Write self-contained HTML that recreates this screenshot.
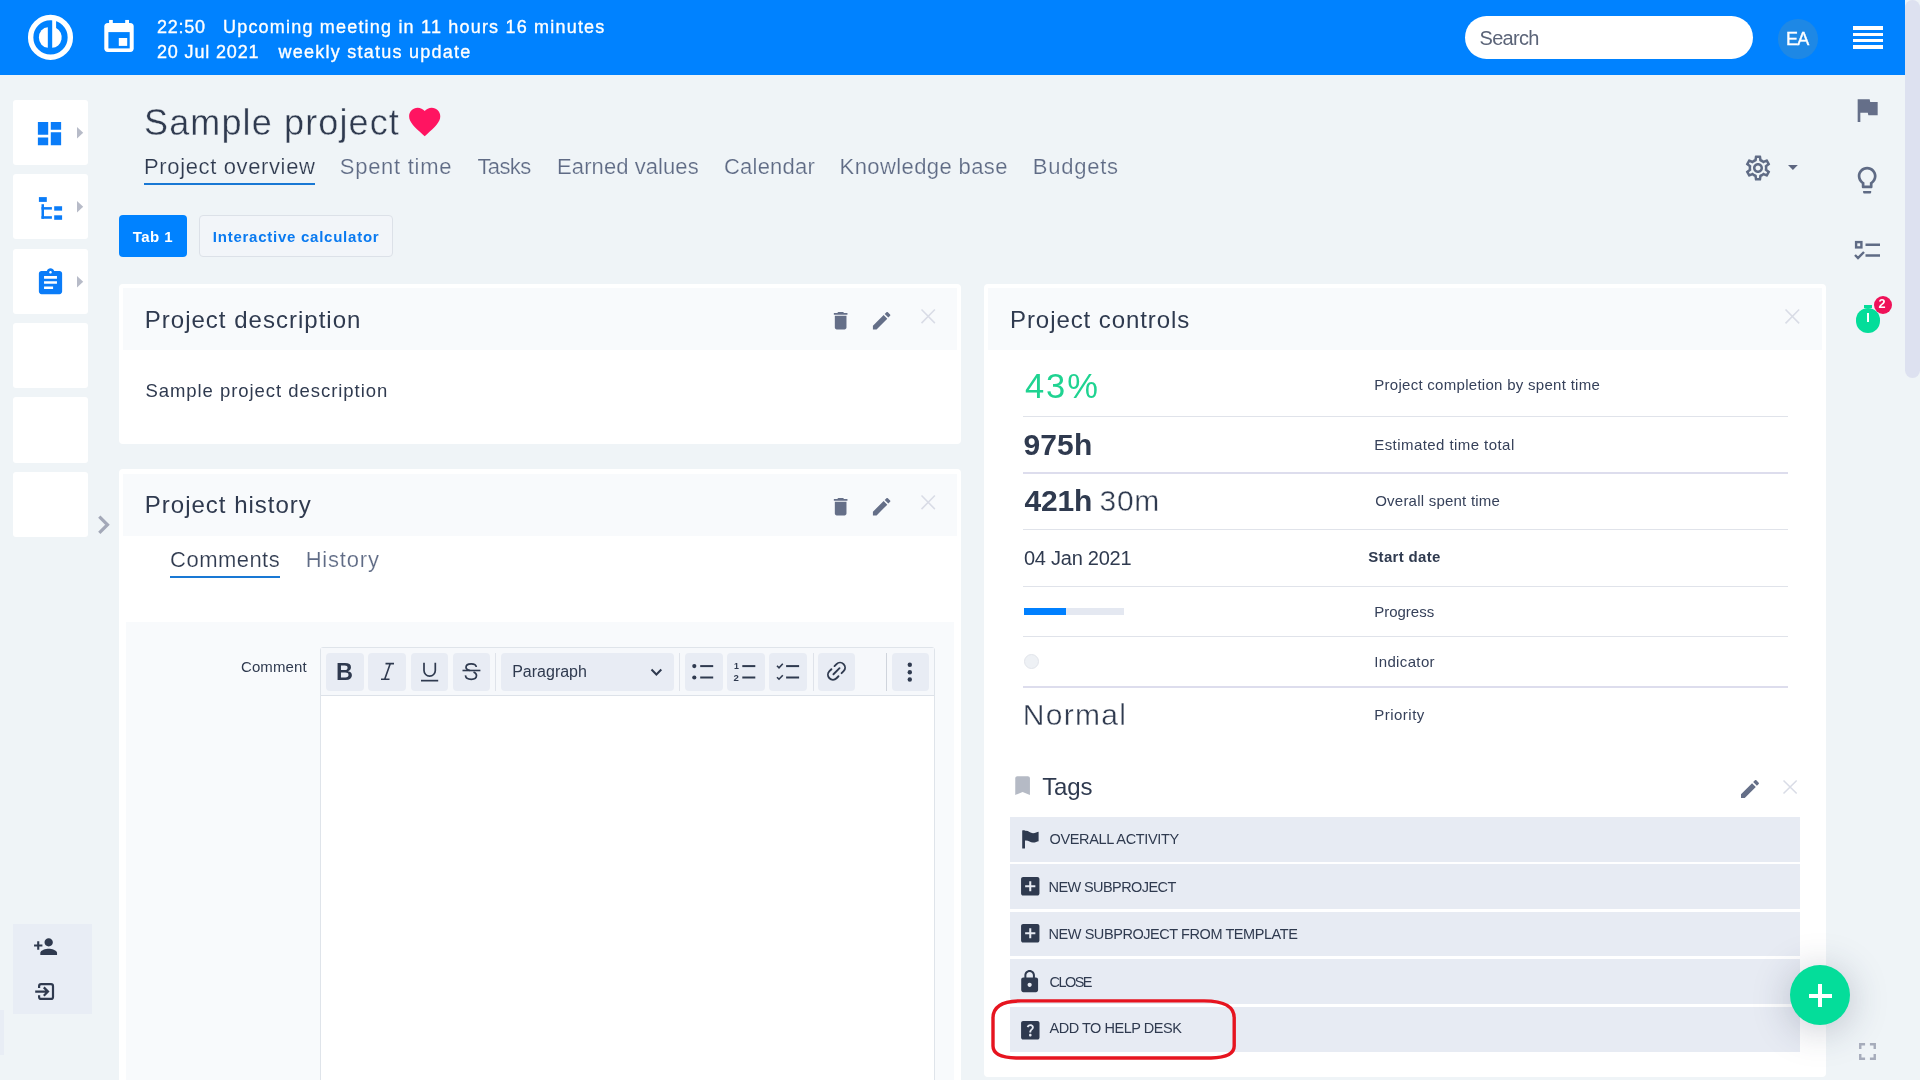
<!DOCTYPE html>
<html lang="en"><head><meta charset="utf-8"><title>Sample project</title>
<style>
*{box-sizing:border-box;margin:0;padding:0}
html,body{width:1920px;height:1080px;overflow:hidden;background:#eff4f7;font-family:"Liberation Sans",sans-serif}
#root{position:relative;width:1920px;height:1080px;overflow:hidden;background:#eff4f7}
.a{position:absolute}
.t{position:absolute;white-space:nowrap;line-height:1;font-family:"Liberation Sans",sans-serif}
svg{position:absolute;overflow:visible}
.tile{position:absolute;left:13.400px;width:74.600px;height:65.200px;background:#fff;border-radius:3px}
.panel{position:absolute;background:#fff;border-radius:4px}
.phead{position:absolute;background:#f8fafc}
.sep{position:absolute;left:1023px;width:765px;height:1px;background:#e0e3ea}
.row{position:absolute;left:1010px;width:790px;height:44.400px;background:#e7ebf3}
.ckb{position:absolute;top:653.2px;width:37.5px;height:37.5px;background:#e8ecf4;border-radius:4px}
.cks{position:absolute;top:653px;width:1px;height:38px;background:#dfe3ea}
#txt{position:absolute;left:0;top:0;width:1920px;height:1080px;will-change:transform}

</style></head>
<body>
<div id="root">
<!-- header -->
<div class="a" style="left:0;top:0;width:1905px;height:74.5px;background:#0082ff"></div>
<!-- scrollbar -->
<div class="a" style="left:1905px;top:0;width:15px;height:1080px;background:#eff4f7"></div>
<div class="a" style="left:1905.300px;top:0;width:15px;height:378px;background:#dde1f0;border-radius:7.500px"></div>
<!-- logo -->
<svg style="left:20px;top:8px" width="60" height="60" viewBox="20 8 60 60">
  <circle cx="50.500" cy="37.400" r="19.850" fill="none" stroke="#fff" stroke-width="5.400"/>
  <path d="M47.800 27.200 A8.900 10.250 0 0 0 47.800 47.700 Z" fill="#fff"/>
  <path d="M52.200 19.500 L56.100 20.300 L56.100 28.100 A9.500 10.250 0 0 1 52.200 47.700 Z" fill="#fff"/>
</svg>
<!-- calendar icon -->
<svg style="left:95px;top:10px" width="50" height="50" viewBox="95 10 50 50">
  <rect x="104.300" y="23" width="29.400" height="28.900" rx="3.600" fill="#fff"/>
  <rect x="109.100" y="19.950" width="3.700" height="5" fill="#fff"/>
  <rect x="125.200" y="19.950" width="3.800" height="5" fill="#fff"/>
  <rect x="108.400" y="32.100" width="21.300" height="16.300" fill="#0082ff"/>
  <rect x="118.800" y="38" width="8.400" height="7.900" fill="#fff"/>
</svg>
<!-- search -->
<div class="a" style="left:1464.5px;top:15.8px;width:288.8px;height:43.5px;background:#fff;border-radius:22px"></div>
<!-- avatar -->
<div class="a" style="left:1778px;top:19.2px;width:39.6px;height:39.6px;background:#1e88e5;border-radius:50%"></div>
<!-- hamburger -->
<div class="a" style="left:1853px;top:26.2px;width:29.5px;height:3.8px;background:#fff"></div>
<div class="a" style="left:1853px;top:32.5px;width:29.5px;height:3.8px;background:#fff"></div>
<div class="a" style="left:1853px;top:38.7px;width:29.5px;height:3.8px;background:#fff"></div>
<div class="a" style="left:1853px;top:45px;width:29.5px;height:3.8px;background:#fff"></div>

<!-- left tiles -->
<div class="tile" style="top:99.8px"></div>
<div class="tile" style="top:174.2px"></div>
<div class="tile" style="top:248.6px"></div>
<div class="tile" style="top:323.0px"></div>
<div class="tile" style="top:397.4px"></div>
<div class="tile" style="top:471.8px"></div>
<!-- tile icons -->
<svg style="left:34.200px;top:118.100px" width="31" height="31" viewBox="0 0 24 24"><path fill="#0a7cf8" d="M3 13h8V3H3v10zm0 8h8v-6H3v6zm10 0h8V11h-8v10zm0-18v6h8V3h-8z"/></svg>
<svg style="left:30px;top:185px" width="60" height="45" viewBox="30 185 60 45"><g fill="#0a7cf8"><rect x="38.9" y="197.100" width="7.900" height="4.800"/><rect x="41.500" y="204.200" width="2.500" height="14.550"/><rect x="41.500" y="207.100" width="10.400" height="2.500"/><rect x="41.500" y="216.200" width="10.400" height="2.550"/><rect x="54.200" y="206.250" width="7.900" height="4.400"/><rect x="54.200" y="215.300" width="7.900" height="4.500"/></g></svg>
<svg style="left:35px;top:267px" width="31" height="31" viewBox="0 0 24 24"><path fill="#0a7cf8" d="M19 3h-4.18C14.4 1.84 13.3 1 12 1c-1.3 0-2.4.84-2.82 2H5c-1.1 0-2 .9-2 2v14c0 1.1.9 2 2 2h14c1.1 0 2-.9 2-2V5c0-1.1-.9-2-2-2zm-7 0c.55 0 1 .45 1 1s-.45 1-1 1-1-.45-1-1 .45-1 1-1zm2 14H7v-2h7v2zm3-4H7v-2h10v2zm0-4H7V7h10v2z"/></svg>
<!-- small arrows on tiles -->
<svg style="left:77px;top:127px" width="6.2" height="11.6" viewBox="0 0 6.2 11.6"><path d="M0 0 L6.2 5.800 L0 11.600Z" fill="#b7bbc8"/></svg>
<svg style="left:77px;top:201.100px" width="6.2" height="11.6" viewBox="0 0 6.2 11.6"><path d="M0 0 L6.2 5.800 L0 11.600Z" fill="#b7bbc8"/></svg>
<svg style="left:77px;top:275.500px" width="6.2" height="11.6" viewBox="0 0 6.2 11.6"><path d="M0 0 L6.2 5.800 L0 11.600Z" fill="#b7bbc8"/></svg>
<!-- collapse chevron -->
<svg style="left:95px;top:510px" width="20" height="30" viewBox="95 510 20 30"><path d="M99.300 516.600 L107.500 524.750 L99.300 532.900" fill="none" stroke="#a3a8b8" stroke-width="3.200"/></svg>
<!-- bottom-left box -->
<div class="a" style="left:13px;top:924px;width:79px;height:90px;background:#e8edf5"></div>
<div class="a" style="left:0;top:1010px;width:4px;height:45px;background:#e8edf5"></div>
<svg style="left:33.200px;top:934.100px" width="25.100" height="25.100" viewBox="0 0 24 24"><path fill="#2f3a4f" d="M15 12c2.21 0 4-1.79 4-4s-1.79-4-4-4-4 1.79-4 4 1.790 4 4 4zm-9-2V7H4v3H1v2h3v3h2v-3h3v-2H6zm9 4c-2.67 0-8 1.34-8 4v2h16v-2c0-2.66-5.33-4-8-4z"/></svg>
<svg style="left:30px;top:978px" width="30" height="28" viewBox="30 978 30 28"><g fill="none" stroke="#2f3a4f" stroke-width="2.200"><path d="M39.100 988 V986.200 a2 2 0 0 1 2-2 H51 a2 2 0 0 1 2 2 V996.900 a2 2 0 0 1 -2 2 H41.100 a2 2 0 0 1 -2-2 V995.200"/><path d="M35.200 991.600 H47.300 M43.800 987.400 L48 991.600 L43.800 995.800"/></g></svg>

<!-- heart -->
<svg style="left:405.600px;top:103.300px" width="37.400" height="37.400" viewBox="0 0 24 24"><path fill="#ff1461" d="M12 21.35l-1.45-1.32C5.4 15.36 2 12.28 2 8.5 2 5.42 4.42 3 7.5 3c1.74 0 3.41.81 4.5 2.090C13.090 3.810 14.760 3 16.500 3 19.580 3 22 5.420 22 8.500c0 3.780-3.400 6.860-8.550 11.540L12 21.350z"/></svg>
<!-- tab underline -->
<div class="a" style="left:144.2px;top:182.5px;width:171px;height:2px;background:#1978d4"></div>
<!-- subtab buttons -->
<div class="a" style="left:119.2px;top:215px;width:67.8px;height:41.8px;background:#0082ff;border-radius:4px"></div>
<div class="a" style="left:199.3px;top:215px;width:193.5px;height:41.8px;border:1px solid #dce1e8;border-radius:4px;background:#f2f5f9"></div>
<!-- gear + caret -->
<svg style="left:1742.600px;top:152.500px" width="30" height="30" viewBox="0 0 24 24"><path fill="#5f6b85" d="M19.43 12.98c.04-.32.07-.64.07-.98 0-.34-.03-.66-.07-.98l2.11-1.65c.19-.15.24-.42.12-.64l-2-3.46c-.09-.16-.26-.25-.44-.25-.06 0-.12.01-.17.03l-2.49 1c-.52-.4-1.08-.73-1.69-.98l-.38-2.65C14.46 2.18 14.25 2 14 2h-4c-.25 0-.46.18-.49.42l-.38 2.65c-.61.25-1.17.59-1.69.98l-2.49-1c-.06-.02-.12-.03-.18-.03-.17 0-.34.09-.43.25l-2 3.46c-.13.22-.07.49.12.64l2.11 1.65c-.04.32-.07.65-.07.98 0 .33.03.66.07.98l-2.11 1.65c-.19.15-.24.42-.12.64l2 3.46c.09.16.26.25.44.25.06 0 .12-.01.17-.03l2.49-1c.52.4 1.08.73 1.69.98l.38 2.65c.03.24.24.42.49.42h4c.25 0 .46-.18.49-.42l.38-2.65c.61-.25 1.17-.59 1.69-.98l2.49 1c.06.02.12.03.18.03.17 0 .34-.09.43-.25l2-3.46c.12-.22.07-.49-.12-.64l-2.11-1.65zm-1.98-1.71c.04.31.05.52.05.73 0 .21-.02.43-.05.73l-.14 1.13.89.7 1.08.84-.7 1.21-1.27-.51-1.04-.42-.9.68c-.43.32-.84.56-1.25.73l-1.06.43-.16 1.13-.2 1.35h-1.4l-.19-1.35-.16-1.13-1.06-.43c-.43-.18-.83-.41-1.23-.71l-.91-.7-1.06.43-1.27.51-.7-1.21 1.08-.84.89-.7-.14-1.13c-.03-.31-.05-.54-.05-.74s.02-.43.05-.73l.14-1.13-.89-.7-1.08-.84.7-1.21 1.27.51 1.04.42.9-.68c.43-.32.84-.56 1.25-.73l1.06-.43.16-1.13.2-1.35h1.39l.19 1.35.16 1.13 1.06.43c.43.18.83.41 1.23.71l.91.7 1.06-.43 1.27-.51.7 1.21-1.07.85-.89.7.14 1.13zM12 8c-2.21 0-4 1.79-4 4s1.79 4 4 4 4-1.79 4-4-1.79-4-4-4zm0 6c-1.1 0-2-.9-2-2s.9-2 2-2 2 .9 2 2-.9 2-2 2z"/></svg>
<svg style="left:1788.100px;top:165px" width="9.800" height="5" viewBox="0 0 10 5" preserveAspectRatio="none"><path d="M0 0h10L5 5z" fill="#5d6680"/></svg>

<!-- right icon column -->
<svg style="left:1851.450px;top:93.900px" width="32" height="32" viewBox="0 0 24 24"><path fill="#656f89" d="M14.4 6L14 4H5v17h2v-7h5.6l.4 2h7V6z"/></svg>
<svg style="left:1851px;top:164px" width="32.300" height="32.300" viewBox="0 0 24 24"><path fill="#5f6b85" d="M9 21c0 .55.45 1 1 1h4c.55 0 1-.45 1-1v-1H9v1zm3-19C8.14 2 5 5.14 5 9c0 2.38 1.19 4.47 3 5.74V17c0 .55.45 1 1 1h6c.55 0 1-.45 1-1v-2.26c1.81-1.27 3-3.36 3-5.74 0-3.86-3.14-7-7-7zm2.85 11.1l-.85.6V16h-4v-2.3l-.85-.6C7.8 12.16 7 10.63 7 9c0-2.76 2.24-5 5-5s5 2.24 5 5c0 1.63-.8 3.16-2.15 4.1z"/></svg>
<svg style="left:1853.800px;top:240px" width="27" height="21" viewBox="0 0 27 21"><g fill="none" stroke="#5f6b85" stroke-width="2.400"><rect x="2.1" y="2.1" width="5.3" height="5.3"/><path d="M11.5 4.8H26M11.5 15.5H26M1 15l3 3 6-6"/></g></svg>
<!-- timer -->
<div class="a" style="left:1855.800px;top:308.400px;width:24.700px;height:24.700px;border-radius:50%;background:#04dd9a"></div>
<div class="a" style="left:1863.900px;top:304.800px;width:8.300px;height:3px;background:#04dd9a"></div>
<div class="a" style="left:1866.700px;top:313.100px;width:2.700px;height:8.900px;background:#fff"></div>
<div class="a" style="left:1874.100px;top:295.900px;width:18px;height:18px;border-radius:50%;background:#ef1259"></div>

<!-- panel: project description -->
<div class="panel" style="left:119px;top:283.900px;width:841.900px;height:160px"></div>
<div class="phead" style="left:123.100px;top:288px;width:833.750px;height:61.500px"></div>
<!-- panel: project history -->
<div class="panel" style="left:119px;top:468.900px;width:841.900px;height:640px"></div>
<div class="phead" style="left:123.100px;top:473.600px;width:833.750px;height:62px"></div>
<!-- comment area -->
<div class="a" style="left:125.800px;top:621.600px;width:828.200px;height:470px;background:#f8fafc"></div>
<div class="a" style="left:170px;top:576px;width:110px;height:2.100px;background:#1978d4"></div>
<!-- editor -->
<div class="a" style="left:320.3px;top:647px;width:614.5px;height:460px;background:#fff;border:1px solid #dfe4ea;border-radius:3px"></div>
<div class="a" style="left:321.300px;top:648px;width:612.500px;height:47.800px;background:#f6f8fb;border-bottom:1px solid #dde2e9"></div>
<div class="ckb" style="left:326.2px"></div>
<div class="ckb" style="left:368.3px"></div>
<div class="ckb" style="left:410.7px"></div>
<div class="ckb" style="left:452.8px"></div>
<div class="cks" style="left:495.3px"></div>
<div class="ckb" style="left:501px;width:173px"></div>
<div class="cks" style="left:679.3px"></div>
<div class="ckb" style="left:685px"></div>
<div class="ckb" style="left:727px"></div>
<div class="ckb" style="left:769px"></div>
<div class="cks" style="left:812.6px"></div>
<div class="ckb" style="left:817.7px"></div>
<div class="cks" style="left:885.6px;background:#cfd4dc;width:1.5px"></div>
<div class="ckb" style="left:891.6px"></div>

<!-- panel icons -->
<svg style="left:829.050px;top:308.900px" width="23.300" height="23.300" viewBox="0 0 24 24"><path fill="#656f88" d="M6 19c0 1.1.9 2 2 2h8c1.1 0 2-.9 2-2V7H6v12zM19 4h-3.5l-1-1h-5l-1 1H5v2h14V4z"/></svg>
<svg style="left:869.800px;top:308.900px" width="23.300" height="23.300" viewBox="0 0 24 24"><path fill="#656f88" d="M3 17.25V21h3.75L17.81 9.94l-3.75-3.75L3 17.25zM20.71 7.04c.39-.39.39-1.02 0-1.41l-2.34-2.34c-.39-.39-1.02-.39-1.41 0l-1.83 1.83 3.75 3.75 1.83-1.83z"/></svg>
<svg style="left:920.700px;top:309px" width="14.400" height="14.600" viewBox="0 0 14 14" preserveAspectRatio="none"><path d="M0.5 0.5L13.5 13.5M13.5 0.5L0.5 13.5" stroke="#d9dce6" stroke-width="1.500" fill="none"/></svg>
<svg style="left:829.050px;top:494.900px" width="23.300" height="23.300" viewBox="0 0 24 24"><path fill="#656f88" d="M6 19c0 1.1.9 2 2 2h8c1.1 0 2-.9 2-2V7H6v12zM19 4h-3.5l-1-1h-5l-1 1H5v2h14V4z"/></svg>
<svg style="left:869.800px;top:494.900px" width="23.300" height="23.300" viewBox="0 0 24 24"><path fill="#656f88" d="M3 17.25V21h3.75L17.81 9.94l-3.75-3.75L3 17.25zM20.71 7.04c.39-.39.39-1.02 0-1.41l-2.34-2.34c-.39-.39-1.02-.39-1.41 0l-1.83 1.83 3.75 3.75 1.83-1.83z"/></svg>
<svg style="left:920.700px;top:495px" width="14.400" height="14.600" viewBox="0 0 14 14" preserveAspectRatio="none"><path d="M0.5 0.5L13.5 13.5M13.5 0.5L0.5 13.5" stroke="#d9dce6" stroke-width="1.500" fill="none"/></svg>

<!-- panel: project controls -->
<div class="panel" style="left:984px;top:283.900px;width:841.650px;height:793.600px"></div>
<div class="phead" style="left:988px;top:288px;width:834px;height:61.700px"></div>
<svg style="left:1785.400px;top:309.200px" width="14.700" height="14.900" viewBox="0 0 14 14" preserveAspectRatio="none"><path d="M0.5 0.5L13.5 13.5M13.5 0.5L0.5 13.5" stroke="#d9dce6" stroke-width="1.500" fill="none"/></svg>
<div class="sep" style="top:415.900px"></div>
<div class="sep" style="top:472.100px;height:2px;background:#dddded"></div>
<div class="sep" style="top:529px"></div>
<div class="sep" style="top:586px"></div>
<div class="sep" style="top:636px"></div>
<div class="sep" style="top:686px;height:2px;background:#dddded"></div>
<!-- progress -->
<div class="a" style="left:1024px;top:608px;width:99.900px;height:6.700px;background:#e4e8f1"></div>
<div class="a" style="left:1024px;top:608px;width:41.800px;height:6.700px;background:#0080ff"></div>
<!-- indicator -->
<div class="a" style="left:1024px;top:654px;width:15px;height:15px;border-radius:50%;background:#eef1f5;border:1px solid #e2e5eb"></div>

<!-- tags -->
<svg style="left:1009.950px;top:772.950px" width="25.200" height="25.200" viewBox="0 0 24 24"><path fill="#b5bac5" d="M17 3H7c-1.1 0-1.99.9-1.99 2L5 21l7-3 7 3V5c0-1.1-.9-2-2-2z"/></svg>
<svg style="left:1737.700px;top:776.700px" width="24" height="24" viewBox="0 0 24 24"><path fill="#656f88" d="M3 17.25V21h3.75L17.81 9.94l-3.75-3.75L3 17.25zM20.71 7.04c.39-.39.39-1.02 0-1.41l-2.34-2.34c-.39-.39-1.02-.39-1.41 0l-1.83 1.83 3.75 3.75 1.83-1.83z"/></svg>
<svg style="left:1782.800px;top:780.400px" width="14.200" height="14" viewBox="0 0 14 14" preserveAspectRatio="none"><path d="M0.5 0.5L13.5 13.5M13.5 0.5L0.5 13.5" stroke="#d9dce6" stroke-width="1.500" fill="none"/></svg>
<div class="row" style="top:817.200px"></div>
<div class="row" style="top:864.300px"></div>
<div class="row" style="top:911.900px"></div>
<div class="row" style="top:959.400px"></div>
<div class="row" style="top:1007.200px"></div>
<!-- row icons -->
<svg style="left:1015px;top:825px" width="30" height="30" viewBox="1015 825 30 30"><g fill="#2f3a4f"><rect x="1022.200" y="830.200" width="2.800" height="18.400" rx="0.600"/><path d="M1024.500 831 C1028 830 1030 833.200 1033 833.200 C1035.500 833.200 1037 832 1038.600 831.800 L1038.600 841.200 C1037 841.400 1035.500 842.600 1033 842.600 C1030 842.600 1028 839.800 1024.500 840.800 Z"/></g></svg>
<svg style="left:1017.500px;top:873.900px" width="24.500" height="24.500" viewBox="0 0 24 24"><path fill="#2f3a4f" d="M19 3H5c-1.11 0-2 .9-2 2v14c0 1.1.89 2 2 2h14c1.1 0 2-.9 2-2V5c0-1.1-.9-2-2-2zm-2 10h-4v4h-2v-4H7v-2h4V7h2v4h4v2z"/></svg>
<svg style="left:1017.500px;top:921.400px" width="24.500" height="24.500" viewBox="0 0 24 24"><path fill="#2f3a4f" d="M19 3H5c-1.11 0-2 .9-2 2v14c0 1.1.89 2 2 2h14c1.1 0 2-.9 2-2V5c0-1.1-.9-2-2-2zm-2 10h-4v4h-2v-4H7v-2h4V7h2v4h4v2z"/></svg>
<svg style="left:1017.300px;top:969.200px" width="25.300" height="25.300" viewBox="0 0 24 24"><path fill="#2f3a4f" d="M18 8h-1V6c0-2.76-2.24-5-5-5S7 3.24 7 6v2H6c-1.1 0-2 .9-2 2v10c0 1.1.9 2 2 2h12c1.1 0 2-.9 2-2V10c0-1.1-.9-2-2-2zm-6 9c-1.1 0-2-.9-2-2s.9-2 2-2 2 .9 2 2-.9 2-2 2zm3.1-9H8.900V6c0-1.710 1.390-3.100 3.100-3.100 1.710 0 3.100 1.390 3.100 3.100v2z"/></svg>
<svg style="left:1017.800px;top:1017.500px" width="24.600" height="24.600" viewBox="0 0 24 24"><path fill="#2f3a4f" d="M19 3H5c-1.1 0-2 .9-2 2v14c0 1.1.9 2 2 2h14c1.1 0 2-.9 2-2V5c0-1.1-.9-2-2-2zm-6.990 15c-.7 0-1.260-.560-1.260-1.260 0-.710.560-1.250 1.260-1.250.710 0 1.250.540 1.250 1.250-.010.690-.540 1.260-1.250 1.260zm3.010-7.400c-.760 1.110-1.480 1.460-1.870 2.170-.160.290-.220.480-.220 1.410h-1.820c0-.490-.080-1.290.310-1.980.490-.870 1.420-1.390 1.960-2.160.570-.810.250-2.330-1.370-2.330-1.060 0-1.580.8-1.800 1.480l-1.650-.7C9.010 7.150 10.220 6 11.990 6c1.480 0 2.490.67 3.010 1.520.440.720.700 2.070.020 3.080z"/></svg>
<!-- red annotation -->
<svg style="left:985px;top:990px" width="260" height="80" viewBox="985 990 260 80"><path d="M1021 1000.900 L1204 1000.900 C1224 1000.900 1234.200 1006 1234.200 1018 L1234.200 1046 C1234.200 1054 1226 1057.600 1211 1058 L1016 1058 C1001 1057.600 993 1054 993 1046 L993 1018 C993 1006 1003 1000.900 1021 1000.900 Z" fill="none" stroke="#e6141f" stroke-width="3.400"/></svg>
<!-- FAB -->
<div class="a" style="left:1790px;top:964.700px;width:60.100px;height:60.100px;border-radius:50%;background:#04dd9a;box-shadow:0 5px 38px rgba(40,50,80,.27)"></div>
<div class="a" style="left:1809px;top:993.800px;width:22.700px;height:3.900px;background:#fff"></div>
<div class="a" style="left:1818.200px;top:984.300px;width:3.900px;height:22.700px;background:#fff"></div>
<!-- fullscreen icon -->
<svg style="left:1853px;top:1037px" width="29" height="29" viewBox="0 0 24 24"><path fill="#a6acbb" d="M7 14H5v5h5v-2H7v-3zm-2-4h2V7h3V5H5v5zm12 7h-3v2h5v-5h-2v3zM14 5v2h3v3h2V5h-5z"/></svg>
<!-- editor toolbar icons -->
<svg style="left:320px;top:645px" width="620" height="55" viewBox="320 645 620 55">
 <g fill="#2f3a4f" stroke="none">
  <rect x="421" y="679.8" width="17.2" height="1.7"/>
  <rect x="462.5" y="669.7" width="17.9" height="1.6"/>
  <circle cx="694.3" cy="666.1" r="2.1"/><circle cx="694.3" cy="677.5" r="2.1"/>
  <rect x="700.2" y="665.1" width="13" height="2"/><rect x="700.2" y="676.5" width="13" height="2"/>
  <rect x="742.3" y="665.1" width="13" height="2"/><rect x="742.3" y="676.5" width="13" height="2"/>
  <rect x="786.1" y="665.1" width="13" height="2"/><rect x="786.1" y="676.5" width="13" height="2"/>
  <circle cx="909.8" cy="664.8" r="2.2"/><circle cx="909.8" cy="672.2" r="2.2"/><circle cx="909.8" cy="679.5" r="2.2"/>
 </g>
 <g fill="none" stroke="#2f3a4f">
  <path d="M424 662.8 V670.5 a5.65 5.65 0 0 0 11.3 0 V662.8" stroke-width="1.7"/>
  <path d="M476.3 667 C476 664.8 474 663.9 471.2 663.9 C468 663.9 466 665.2 466 667.3 C466 669.200 467.5 670 470 670.5" stroke-width="1.7"/>
  <path d="M473.5 672 C475.5 672.800 476.5 673.900 476.5 675.6 C476.5 678 474.3 679.3 471.3 679.3 C468 679.3 465.800 678 465.4 675.4" stroke-width="1.7"/>
  <path d="M385.500 663.600 H394 M381 679.300 H389.500 M390.300 663.600 L384.700 679.300" stroke-width="1.600"/>
  <path d="M651.5 669.5 L656.4 674.5 L661.3 669.5" stroke-width="2"/>
  <path d="M777 665.8 L779 667.800 L782.800 663.800" stroke-width="1.600"/>
  <path d="M777 677.200 L779 679.200 L782.800 675.200" stroke-width="1.600"/>
  <g transform="rotate(-45 836.5 671.2)" stroke-width="1.900" stroke-linecap="round">
   <path d="M834.300 666.200 H831.500 a5 5 0 0 0 0 10 H834.300"/>
   <path d="M838.700 666.200 H841.500 a5 5 0 0 1 0 10 H838.700"/>
   <path d="M832.200 671.200 H840.800"/>
  </g>
 </g>
</svg>

<div id="txt">
<span class="t" style="left:157.00px;top:17.76px;font-size:18px;font-weight:400;color:#ffffff;letter-spacing:0.742px;-webkit-text-stroke:0.35px #fff;">22:50</span>
<span class="t" style="left:223.00px;top:17.76px;font-size:18px;font-weight:400;color:#ffffff;letter-spacing:1.196px;-webkit-text-stroke:0.35px #fff;">Upcoming meeting in 11 hours 16 minutes</span>
<span class="t" style="left:157.00px;top:42.76px;font-size:18px;font-weight:400;color:#ffffff;letter-spacing:0.843px;-webkit-text-stroke:0.35px #fff;">20 Jul 2021</span>
<span class="t" style="left:278.50px;top:42.76px;font-size:18px;font-weight:400;color:#ffffff;letter-spacing:1.243px;-webkit-text-stroke:0.35px #fff;">weekly status update</span>
<span class="t" style="left:1479.50px;top:28.07px;font-size:20px;font-weight:400;color:#5b6478;letter-spacing:-0.709px;">Search</span>
<span class="t" style="left:1786.00px;top:30.36px;font-size:18px;font-weight:400;color:#ffffff;letter-spacing:-0.706px;-webkit-text-stroke:0.35px #fff;">EA</span>
<span class="t" style="left:144.00px;top:104.53px;font-size:36px;font-weight:400;color:#2f3a4f;letter-spacing:1.130px;-webkit-text-stroke:0.4px #eff4f7;">Sample project</span>
<span class="t" style="left:144.00px;top:155.58px;font-size:22px;font-weight:400;color:#2f3a4f;letter-spacing:0.633px;-webkit-text-stroke:0.2px #eff4f7;">Project overview</span>
<span class="t" style="left:339.80px;top:155.58px;font-size:22px;font-weight:400;color:#5f6b85;letter-spacing:0.719px;-webkit-text-stroke:0.2px #eff4f7;">Spent time</span>
<span class="t" style="left:477.50px;top:155.58px;font-size:22px;font-weight:400;color:#5f6b85;letter-spacing:-0.634px;-webkit-text-stroke:0.2px #eff4f7;">Tasks</span>
<span class="t" style="left:557.10px;top:155.58px;font-size:22px;font-weight:400;color:#5f6b85;letter-spacing:0.079px;-webkit-text-stroke:0.2px #eff4f7;">Earned values</span>
<span class="t" style="left:724.00px;top:155.58px;font-size:22px;font-weight:400;color:#5f6b85;letter-spacing:0.207px;-webkit-text-stroke:0.2px #eff4f7;">Calendar</span>
<span class="t" style="left:839.60px;top:155.58px;font-size:22px;font-weight:400;color:#5f6b85;letter-spacing:0.397px;-webkit-text-stroke:0.2px #eff4f7;">Knowledge base</span>
<span class="t" style="left:1032.80px;top:155.58px;font-size:22px;font-weight:400;color:#5f6b85;letter-spacing:0.762px;-webkit-text-stroke:0.2px #eff4f7;">Budgets</span>
<span class="t" style="left:132.80px;top:229.00px;font-size:15px;font-weight:700;color:#ffffff;letter-spacing:0.420px;">Tab 1</span>
<span class="t" style="left:212.80px;top:229.00px;font-size:15px;font-weight:700;color:#0a7af0;letter-spacing:0.751px;">Interactive calculator</span>
<span class="t" style="left:144.80px;top:307.78px;font-size:24px;font-weight:400;color:#2f3a4f;letter-spacing:1.007px;">Project description</span>
<span class="t" style="left:145.40px;top:382.24px;font-size:18.5px;font-weight:400;color:#2f3a4f;letter-spacing:0.956px;">Sample project description</span>
<span class="t" style="left:144.80px;top:493.48px;font-size:24px;font-weight:400;color:#2f3a4f;letter-spacing:0.996px;">Project history</span>
<span class="t" style="left:170.10px;top:548.98px;font-size:22px;font-weight:400;color:#2f3a4f;letter-spacing:0.463px;-webkit-text-stroke:0.2px #fff;">Comments</span>
<span class="t" style="left:305.70px;top:548.98px;font-size:22px;font-weight:400;color:#5f6b85;letter-spacing:0.792px;-webkit-text-stroke:0.2px #fff;">History</span>
<span class="t" style="left:241.00px;top:659.30px;font-size:15px;font-weight:400;color:#2f3a4f;letter-spacing:0.092px;">Comment</span>
<span class="t" style="left:512.20px;top:663.86px;font-size:16px;font-weight:400;color:#2f3a4f;letter-spacing:0.000px;">Paragraph</span>
<span class="t" style="left:1010.00px;top:307.98px;font-size:24px;font-weight:400;color:#2f3a4f;letter-spacing:0.927px;">Project controls</span>
<span class="t" style="left:1025.00px;top:368.90px;font-size:34.5px;font-weight:400;color:#1fd391;letter-spacing:1.913px;">43%</span>
<span class="t" style="left:1023.40px;top:430.11px;font-size:30px;font-weight:700;color:#2f3a4f;letter-spacing:0.182px;">975h</span>
<span class="t" style="left:1024.40px;top:486.21px;font-size:30px;font-weight:700;color:#2f3a4f;letter-spacing:-0.151px;">421h</span>
<span class="t" style="left:1099.50px;top:486.21px;font-size:30px;font-weight:400;color:#2f3a4f;letter-spacing:0.715px;-webkit-text-stroke:0.4px #fff;">30m</span>
<span class="t" style="left:1024.00px;top:548.37px;font-size:20px;font-weight:400;color:#2f3a4f;letter-spacing:-0.257px;">04 Jan 2021</span>
<span class="t" style="left:1022.80px;top:700.31px;font-size:30px;font-weight:400;color:#2f3a4f;letter-spacing:1.277px;-webkit-text-stroke:0.4px #fff;">Normal</span>
<span class="t" style="left:1374.20px;top:377.30px;font-size:15px;font-weight:400;color:#36415a;letter-spacing:0.286px;">Project completion by spent time</span>
<span class="t" style="left:1374.20px;top:437.30px;font-size:15px;font-weight:400;color:#36415a;letter-spacing:0.438px;">Estimated time total</span>
<span class="t" style="left:1375.20px;top:493.30px;font-size:15px;font-weight:400;color:#36415a;letter-spacing:0.227px;">Overall spent time</span>
<span class="t" style="left:1368.30px;top:549.30px;font-size:15px;font-weight:700;color:#2f3a4f;letter-spacing:0.318px;">Start date</span>
<span class="t" style="left:1374.20px;top:604.30px;font-size:15px;font-weight:400;color:#36415a;letter-spacing:-0.003px;">Progress</span>
<span class="t" style="left:1374.20px;top:654.30px;font-size:15px;font-weight:400;color:#36415a;letter-spacing:0.358px;">Indicator</span>
<span class="t" style="left:1374.20px;top:707.10px;font-size:15px;font-weight:400;color:#36415a;letter-spacing:0.490px;">Priority</span>
<span class="t" style="left:1042.20px;top:774.68px;font-size:24px;font-weight:400;color:#2f3a4f;letter-spacing:-0.098px;">Tags</span>
<span class="t" style="left:1049.50px;top:831.73px;font-size:14.5px;font-weight:400;color:#2f3a4f;letter-spacing:-0.347px;">OVERALL ACTIVITY</span>
<span class="t" style="left:1048.50px;top:879.73px;font-size:14.5px;font-weight:400;color:#2f3a4f;letter-spacing:-0.584px;">NEW SUBPROJECT</span>
<span class="t" style="left:1048.50px;top:927.23px;font-size:14.5px;font-weight:400;color:#2f3a4f;letter-spacing:-0.433px;">NEW SUBPROJECT FROM TEMPLATE</span>
<span class="t" style="left:1049.50px;top:974.73px;font-size:14.5px;font-weight:400;color:#2f3a4f;letter-spacing:-1.546px;">CLOSE</span>
<span class="t" style="left:1049.50px;top:1021.43px;font-size:14.5px;font-weight:400;color:#2f3a4f;letter-spacing:-0.471px;">ADD TO HELP DESK</span>
<span class="t" style="left:1878.40px;top:298.45px;font-size:12.7px;font-weight:700;color:#ffffff;letter-spacing:0.000px;">2</span>
<span class="t" style="left:335.90px;top:661.41px;font-size:23.5px;font-weight:700;color:#2f3a4f;letter-spacing:0.000px;">B</span>
<span class="t" style="left:733.90px;top:661.75px;font-size:8.8px;font-weight:700;color:#2f3a4f;letter-spacing:0.000px;">1</span>
<span class="t" style="left:733.50px;top:673.47px;font-size:9.6px;font-weight:700;color:#2f3a4f;letter-spacing:0.000px;">2</span>
</div>
</div>
</body></html>
